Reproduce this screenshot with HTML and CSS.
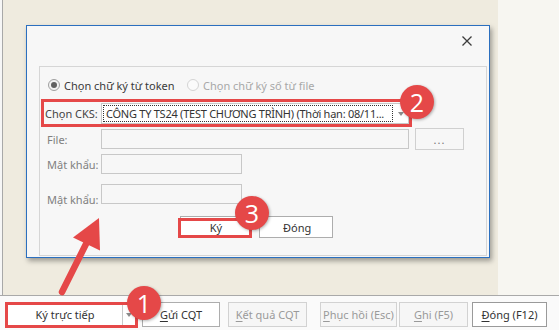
FILE: index.html
```html
<!doctype html>
<html lang="vi">
<head>
	<meta charset="UTF-8">
	<title>Ký hóa đơn</title>
	<link rel="stylesheet" href="styles.css">
</head>
<body>
	<div class="desk">
		<div class="dialog">
			<div class="titlebar">
				<svg class="close-x" width="10" height="10" viewBox="0 0 10 10"><path d="M0.5 0.5L9.5 9.5M9.5 0.5L0.5 9.5" stroke="#3c3c3c" stroke-width="1.3"/></svg>
			</div>
			<div class="group">
				<div class="row radios">
					<label class="radio on"><span class="dot"></span>Chọn chữ ký từ token</label>
					<label class="radio off"><span class="dot"></span>Chọn chữ ký số từ file</label>
				</div>
				<div class="row cks">
					<span class="lbl dark">Chọn CKS:</span>
					<div class="combo">
						<span class="combo-text">CÔNG TY TS24 (TEST CHƯƠNG TRÌNH) (Thời hạn: 08/11...</span>
						<span class="caret"></span>
					</div>
				</div>
				<div class="row file">
					<span class="lbl">File:</span>
					<div class="field wide"></div>
					<div class="btn browse">...</div>
				</div>
				<div class="row pass">
					<span class="lbl">Mật khẩu:</span>
					<div class="field short"></div>
				</div>
				<div class="row pass2">
					<span class="lbl">Mật khẩu:</span>
					<div class="field short"></div>
				</div>
				<div class="row actions">
					<div class="btn sign">Ký</div>
					<div class="btn shut">Đóng</div>
				</div>
			</div>
		</div>
	</div>
	<div class="toolbar">
		<div class="tbtn split"><span class="split-main">Ký trực tiếp</span><span class="split-drop"><span class="caret"></span></span></div>
		<div class="tbtn send"><u>G</u>ửi CQT</div>
		<div class="tbtn result off"><u>K</u>ết quả CQT</div>
		<div class="tbtn restore off"><u>P</u>hục hồi (Esc)</div>
		<div class="tbtn save off"><u>G</u>hi (F5)</div>
		<div class="tbtn quit"><u>Đ</u>óng (F12)</div>
	</div>

	<svg class="arrow" width="559" height="330" viewBox="0 0 559 330">
		<line x1="62" y1="292" x2="88" y2="240" stroke="#e54848" stroke-width="6.5" stroke-linecap="round"/>
		<polygon points="99,218 73,237.5 100,250.5" fill="#e54848"/>
	</svg>
	<div class="mark mark-cks"></div>
	<div class="mark mark-sign"></div>
	<div class="mark mark-direct"></div>
	<div class="badge badge-1">1</div>
	<div class="badge badge-2">2</div>
	<div class="badge badge-3">3</div>
</body>
</html>
```
FILE: styles.css
```css
* { box-sizing: border-box; }
body { margin: 0; width: 559px; height: 330px; overflow: hidden; position: relative; font: 11px "Noto Sans", "Open Sans", sans-serif; color: #3a3a3a; background: #fafafa; }

.desk { position: relative; height: 296px; background: linear-gradient(to right, #f6f6f6 0 2px, #a8a8a8 2px 3px, #efebdf 3px 498px, #f7f6f1 498px); border-bottom: 1px solid #a9a9a9; }

.dialog { position: absolute; left: 26px; top: 25px; width: 464px; height: 233px; display: flex; flex-direction: column; background: #f7f7f7; border: 1px solid #2b6fbf; box-shadow: 2px 3px 5px rgba(0,0,0,.35); }
.titlebar { height: 40px; display: flex; justify-content: flex-end; align-items: flex-start; padding: 10px 17px 0 0; }
.group { flex: 1; margin: 0 2px 1px 12px; border: 1px solid #d6d6d6; }

.row { display: flex; align-items: center; }
.radios { height: 18px; margin-top: 9px; padding-left: 8px; }
.radio { display: flex; align-items: center; }
.radio.on { width: 139px; color: #3a3a3a; }
.radio.off { color: #a8a8a8; }
.dot { width: 12px; height: 12px; margin-right: 4px; border-radius: 50%; border: 1px solid #a0a0a0; background: #f2f2f2; display: flex; align-items: center; justify-content: center; }
.radio.on .dot::after { content: ""; width: 6px; height: 6px; border-radius: 50%; background: #606060; }
.radio.off .dot { border-color: #d4d4d4; background: #fbfbfb; }

.lbl { width: 54px; color: #808080; white-space: nowrap; }
.lbl.dark { width: 56px; color: #444; }
.cks { height: 21px; margin-top: 9px; padding-left: 5px; }
.combo { width: 308px; height: 21px; background: #fff; border: 1px solid #c8c8c8; display: flex; align-items: center; padding: 1px; }
.combo-text { flex: none; width: 290px; height: 100%; border: 1px dotted #333; padding-left: 2px; line-height: 16px; letter-spacing: -0.25px; color: #333; white-space: nowrap; overflow: hidden; }
.combo .caret { margin-left: 5px; }
.caret { width: 0; height: 0; border-left: 3.5px solid transparent; border-right: 3.5px solid transparent; border-top: 4px solid #8c8c8c; }

.file { height: 22px; margin-top: 4px; padding-left: 7px; }
.field { height: 20px; border: 1px solid #c8c8c8; background: #f7f7f7; }
.field.wide { width: 308px; }
.field.short { width: 141px; }
.pass { height: 20px; margin-top: 4px; padding-left: 7px; }
.pass2 { height: 20px; margin-top: 10px; padding-left: 7px; align-items: flex-end; }
.pass2 .lbl { line-height: 14px; margin-bottom: -3px; }

.btn { display: flex; align-items: center; justify-content: center; height: 22px; border: 1px solid #adadad; background: #fff; color: #333; }
.browse { width: 49px; margin-left: 6px; border-color: #d0d0d0; background: #f7f7f7; color: #777; letter-spacing: 1px; }
.actions { height: 22px; margin-top: 12px; padding-left: 140px; }
.sign { width: 72px; }
.shut { width: 74px; margin-left: 7px; justify-content: flex-start; padding-left: 23px; }

.toolbar { display: flex; padding: 6px 0 0 7px; }
.tbtn { height: 25px; display: flex; align-items: center; justify-content: center; border: 1px solid #adadad; background: #fff; color: #333; }
.tbtn.off { border-color: #d2d2d2; background: #f6f6f6; color: #9a9a9a; }
.tbtn u { text-underline-offset: 2px; }
.split { width: 129px; justify-content: flex-start; }
.split-main { width: 115px; height: 100%; display: flex; align-items: center; justify-content: center; border-right: 1px solid #c8c8c8; }
.split-drop { flex: 1; display: flex; justify-content: center; }
.send { width: 78px; margin-left: 6px; }
.result { width: 79px; margin-left: 8px; }
.restore { width: 77px; margin-left: 13px; }
.save { width: 69px; margin-left: 2px; }
.quit { width: 75px; margin-left: 4px; border-color: #9a9a9a; }

.arrow { position: absolute; left: 0; top: 0; pointer-events: none; }
.mark { position: absolute; border: 3px solid #e54848; }
.mark-cks { left: 41px; top: 99px; width: 371px; height: 28px; }
.mark-sign { left: 178px; top: 218px; width: 74px; height: 20px; }
.mark-direct { left: 5px; top: 302px; width: 133px; height: 26px; }

.badge { position: absolute; width: 34px; height: 34px; border-radius: 50%; background: #e54848; color: #fff; font: 400 25px/34px "Open Sans", "Noto Sans", sans-serif; text-align: center; box-shadow: 1px 1px 3px rgba(0,0,0,.3); }
.badge-1 { left: 127px; top: 286px; }
.badge-2 { left: 400px; top: 85px; }
.badge-3 { left: 235px; top: 196px; }
```
